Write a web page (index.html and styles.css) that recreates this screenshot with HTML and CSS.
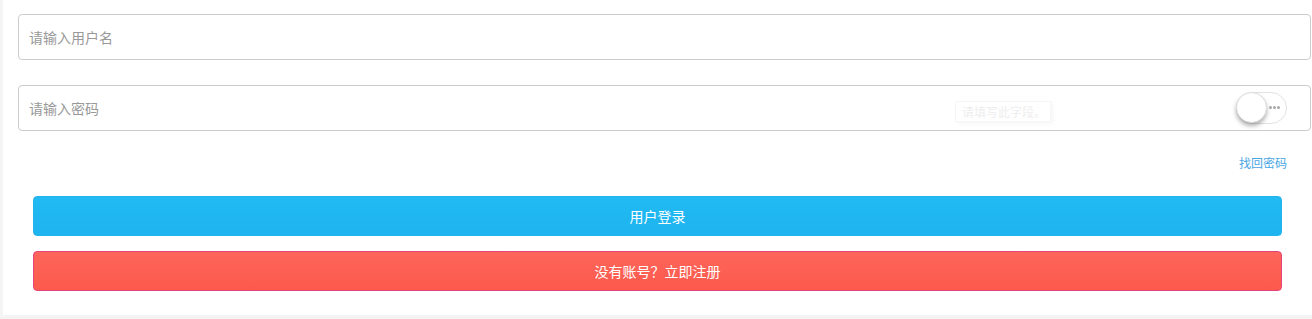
FILE: index.html
```html
<!doctype html>
<html lang="zh-CN">
  <head>
    <meta charset="utf-8">
    <meta name="viewport" content="width=device-width, initial-scale=1">
    <title>用户登录</title>
    <link rel="stylesheet" href="styles.css">
  </head>
  <body>
    <div class="panel">
      <form class="login-form">
        <div class="field">
          <input type="text" class="form-input" placeholder="请输入用户名">
        </div>
        <div class="field field-pass">
          <input type="password" class="form-input" placeholder="请输入密码">
          <div class="tip">请填写此字段。</div>
          <span class="switch">
            <span class="knob"></span>
            <span class="dots"><i></i><i></i><i></i></span>
          </span>
        </div>
        <div class="forgot-row">
          <a href="#" class="forgot">找回密码</a>
        </div>
        <div class="actions">
          <button type="button" class="btn btn-login">用户登录</button>
          <button type="button" class="btn btn-reg">没有账号？立即注册</button>
        </div>
      </form>
    </div>
  </body>
</html>
```

FILE: styles.css
```css
html, body {
     margin: 0;
     padding: 0;
}
body {
     background-color: #f4f4f4;
     font-family: "Noto Sans CJK SC", "Liberation Sans", sans-serif;
     font-size: 14px;
     color: #333;
}
.panel {
     margin-left: 3px;
     height: 315px;
     background-color: #fff;
     box-sizing: border-box;
     padding-top: 14px;
}
.login-form {
     display: flex;
     flex-direction: column;
}
.field {
     margin: 0 1px 0 15px;
}
.field + .field {
     margin-top: 25px;
}
.field-pass {
     position: relative;
}
.form-input {
     display: block;
     width: 100%;
     height: 46px;
     box-sizing: border-box;
     padding: 0 10px;
     border: 1px solid #ccc;
     border-radius: 4px;
     background: #fff;
     font-family: inherit;
     font-size: 14px;
     outline: none;
}
.form-input::placeholder {
     color: #999;
}
.tip {
     position: absolute;
     left: 937px;
     top: 16px;
     width: 96px;
     height: 21px;
     box-sizing: border-box;
     padding-left: 6px;
     line-height: 20px;
     font-size: 12px;
     color: #eeeeee;
     border: 1px solid #f6f6f6;
     box-shadow: 2px 2px 4px rgba(0, 0, 0, .04);
     background: #fff;
}
.switch {
     position: absolute;
     left: 1218px;
     top: 7px;
     width: 51px;
     height: 32px;
     box-sizing: border-box;
     border: 1px solid #e3e3e3;
     border-radius: 16px;
     background: #fff;
}
.knob {
     position: absolute;
     left: -1px;
     top: -1px;
     width: 31px;
     height: 31px;
     border-radius: 50%;
     background: #fff;
     border: 1px solid #ddd;
     box-sizing: border-box;
     box-shadow: 0 3px 4px rgba(0, 0, 0, .3);
}
.dots {
     position: absolute;
     right: 6px;
     top: 13px;
     display: flex;
     gap: 1px;
}
.dots i {
     display: block;
     width: 3px;
     height: 3px;
     border-radius: 50%;
     background: #a8a8a8;
}
.forgot-row {
     display: flex;
     justify-content: flex-end;
     padding: 24px 25px 0 0;
     height: 47px;
     box-sizing: border-box;
}
.forgot {
     font-size: 12px;
     line-height: 16px;
     color: #4aa6e2;
     text-decoration: none;
}
.actions {
     display: flex;
     flex-direction: column;
     gap: 15px;
     margin: 18px 30px 0 30px;
}
.btn {
     display: block;
     width: 100%;
     height: 40px;
     border-radius: 4px;
     font-family: inherit;
     font-size: 14px;
     color: #fff;
     cursor: pointer;
     padding: 0;
}
.btn-login {
     background: linear-gradient(#22baf3, #1db4ef);
     border: 1px solid #22b4ee;
}
.btn-reg {
     background: linear-gradient(#fe655b, #fc5a4c);
     border: 1px solid #e6437a;
}
```
